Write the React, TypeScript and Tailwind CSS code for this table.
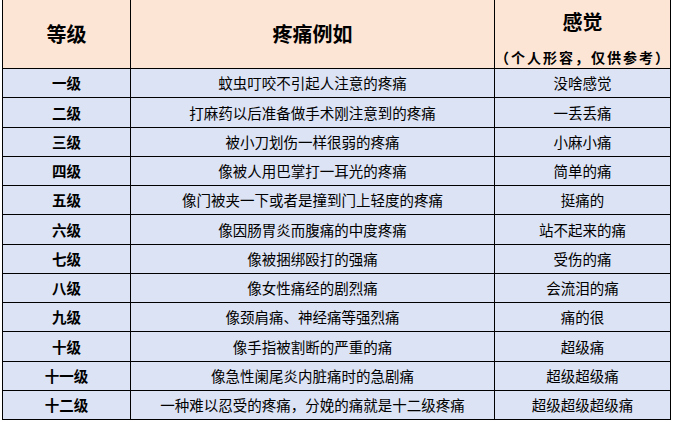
import { Fragment } from 'react';

const rows: [string, string, string][] = [
  ['一级', '蚊虫叮咬不引起人注意的疼痛', '没啥感觉'],
  ['二级', '打麻药以后准备做手术刚注意到的疼痛', '一丢丢痛'],
  ['三级', '被小刀划伤一样很弱的疼痛', '小麻小痛'],
  ['四级', '像被人用巴掌打一耳光的疼痛', '简单的痛'],
  ['五级', '像门被夹一下或者是撞到门上轻度的疼痛', '挺痛的'],
  ['六级', '像因肠胃炎而腹痛的中度疼痛', '站不起来的痛'],
  ['七级', '像被捆绑殴打的强痛', '受伤的痛'],
  ['八级', '像女性痛经的剧烈痛', '会流泪的痛'],
  ['九级', '像颈肩痛、神经痛等强烈痛', '痛的很'],
  ['十级', '像手指被割断的严重的痛', '超级痛'],
  ['十一级', '像急性阑尾炎内脏痛时的急剧痛', '超级超级痛'],
  ['十二级', '一种难以忍受的疼痛，分娩的痛就是十二级疼痛', '超级超级超级痛'],
];

export default function App() {
  return (
    <div className="h-[422px] w-[673px] bg-white" style={{ fontFamily: '"Noto Sans CJK SC", "Noto Sans", sans-serif' }}>
      {/* 表格：黑色背景 + 1px 间隙当作边框 */}
      <div className="ml-[2px] grid h-[420px] w-[669px] grid-cols-[127px_363px_175px] grid-rows-[68px_repeat(12,1fr)] gap-[1px] bg-black px-[1px] pb-[1px] text-black">
        <div className="flex items-center justify-center bg-[#fde5d5] text-[20px] font-bold">等级</div>
        <div className="flex items-center justify-center bg-[#fde5d5] text-[20px] font-bold">疼痛例如</div>
        <div className="flex flex-col items-center bg-[#fde5d5] pt-[8px] font-bold">
          <span className="text-[20px] leading-[28px]">感觉</span>
          <span className="mt-[11px] text-[14px] leading-[20px] tracking-[2px]">（个人形容，仅供参考）</span>
        </div>

        {rows.map(([level, example, feel]) => (
          <Fragment key={level}>
            <div className="flex items-center justify-center bg-[#dce3f4] text-[14.5px] font-bold">{level}</div>
            <div className="flex items-center justify-center bg-[#dce3f4] text-[14.5px]">{example}</div>
            <div className="flex items-center justify-center bg-[#dce3f4] text-[14.5px]">{feel}</div>
          </Fragment>
        ))}
      </div>
    </div>
  );
}
